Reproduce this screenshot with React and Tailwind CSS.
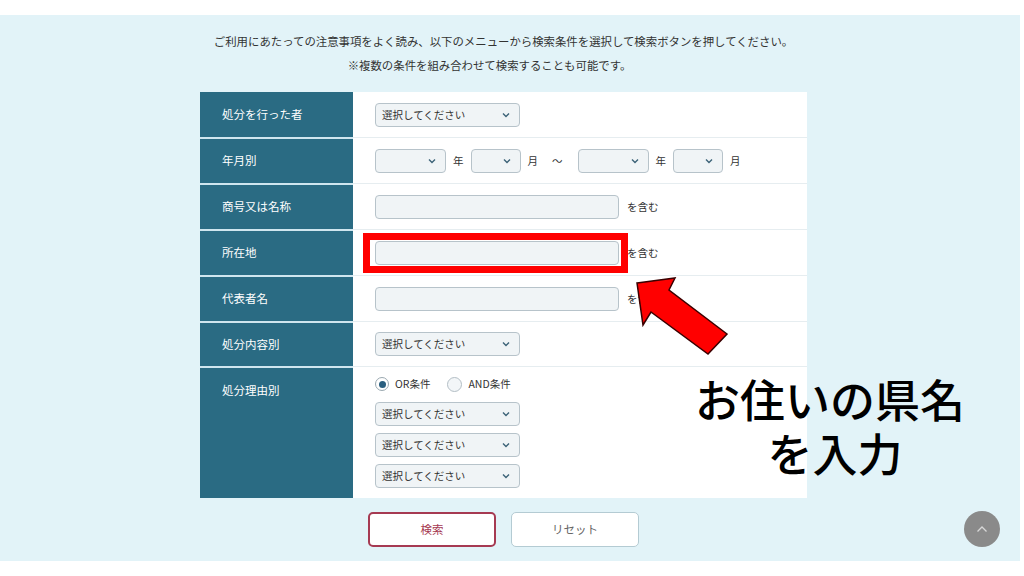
import React from "react";

function Chevron() {
  return (
    <svg width="8" height="6" viewBox="0 0 8 6" className="shrink-0">
      <path d="M1 1.5 L4 4.5 L7 1.5" fill="none" stroke="#3d6378" strokeWidth="1.4" />
    </svg>
  );
}

function Select({ w = "w-[145px]", text = "" }) {
  return (
    <div className={`${w} h-[24px] bg-[#f0f4f6] border border-[#b7c3ca] rounded-[4px] flex items-center justify-between pl-[6px] pr-[9px] text-[10.5px] text-[#333]`}>
      <span>{text}</span>
      <Chevron />
    </div>
  );
}

function TextInput() {
  return <div className="w-[244px] h-[24px] bg-[#f0f4f6] border border-[#b7c3ca] rounded-[4px]" />;
}

function Row({ label, children, h = "h-[46px]", top = false, alignTop = false }) {
  return (
    <div className={`flex ${h} ${top ? "" : "border-t border-[#e6edf0]"}`}>
      <div className={`w-[153px] shrink-0 bg-[#2a6b83] text-white text-[11.5px] pl-[22px] flex ${alignTop ? "items-start pt-[14px]" : "items-center"} ${top ? "" : "border-t-2 border-[#cfe6ef] -mt-px"}`}>
        {label}
      </div>
      <div className={`flex-1 bg-white pl-[22px] flex ${alignTop ? "flex-col pt-[8px]" : "items-center"} text-[10.5px] text-[#333]`}>
        {children}
      </div>
    </div>
  );
}

export default function App() {
  return (
    <div className="w-[1024px] h-[576px] bg-white relative overflow-hidden font-['Noto_Sans_CJK_JP',sans-serif]">
      <div className="h-[15px]" />
      <div className="w-[1020px] h-[546px] bg-[#e2f3f8] pt-[14px]">
        <div className="ml-[200px] w-[607px]">
          <div className="text-center text-[11.4px] leading-[24px] text-[#333] whitespace-nowrap -mx-[20px]">
            <p>ご利用にあたっての注意事項をよく読み、以下のメニューから検索条件を選択して検索ボタンを押してください。</p>
            <p className="-ml-[28px]">※複数の条件を組み合わせて検索することも可能です。</p>
          </div>

          <div className="mt-[15px]">
            <Row label="処分を行った者" top h="h-[45px]">
              <Select text="選択してください" />
            </Row>
            <Row label="年月別">
              <Select w="w-[71px]" />
              <span className="ml-[7px] mr-[7px]">年</span>
              <Select w="w-[50px]" />
              <span className="ml-[7px]">月</span>
              <span className="ml-[14px] mr-[15px]">～</span>
              <Select w="w-[71px]" />
              <span className="ml-[7px] mr-[7px]">年</span>
              <Select w="w-[50px]" />
              <span className="ml-[7px]">月</span>
            </Row>
            <Row label="商号又は名称">
              <TextInput />
              <span className="ml-[8px]">を含む</span>
            </Row>
            <Row label="所在地">
              <TextInput />
              <span className="ml-[8px]">を含む</span>
            </Row>
            <Row label="代表者名">
              <TextInput />
              <span className="ml-[8px]">を含む</span>
            </Row>
            <Row label="処分内容別" h="h-[45px]">
              <Select text="選択してください" />
            </Row>
            <Row label="処分理由別" h="h-[132px]" alignTop>
              <div className="flex items-center h-[18px] gap-[6px]">
                <span className="w-[14px] h-[14px] rounded-full border border-[#9aa8b0] bg-white flex items-center justify-center">
                  <span className="w-[7px] h-[7px] rounded-full bg-[#2a5f7f]" />
                </span>
                <span>OR条件</span>
                <span className="ml-[11px] w-[15px] h-[15px] rounded-full border border-[#b3bec5] bg-[#f3f6f8]" />
                <span>AND条件</span>
              </div>
              <div className="mt-[9px] flex flex-col gap-[7px]">
                <Select text="選択してください" />
                <Select text="選択してください" />
                <Select text="選択してください" />
              </div>
            </Row>
          </div>

          <div className="mt-[14px] flex justify-center gap-[15px]">
            <button className="w-[128px] h-[35px] bg-white border-2 border-[#a63a52] rounded-[5px] text-[11.5px] text-[#a63a52]">検索</button>
            <button className="w-[128px] h-[35px] bg-white border border-[#b4cbd3] rounded-[5px] text-[11.5px] text-[#666]">リセット</button>
          </div>
        </div>
      </div>

      {/* annotation overlays */}
      <div className="absolute left-[363px] top-[233px] w-[265px] h-[40px] border-[7px] border-[#ff0000]" />
      <svg className="absolute left-0 top-0" width="1024" height="576" viewBox="0 0 1024 576">
        <polygon
          points="637,283 675,278 669,290 727,334 708,354 651,312 643,325"
          fill="#ff0000"
          stroke="#3a0000"
          strokeWidth="1.5"
          strokeLinejoin="miter"
        />
      </svg>
      <div className="absolute left-[680px] top-[372px] w-[300px] text-center text-[45px] leading-[54px] font-medium text-black">
        <p>お住いの県名</p>
        <p className="pl-[10px]">を入力</p>
      </div>

      <div className="absolute left-[964px] top-[511px] w-[36px] h-[36px] rounded-full bg-[#8a8a8a] flex items-center justify-center">
        <svg width="12" height="8" viewBox="0 0 12 8">
          <path d="M1.5 6.5 L6 2 L10.5 6.5" fill="none" stroke="#d8d8d8" strokeWidth="1.3" />
        </svg>
      </div>
    </div>
  );
}
